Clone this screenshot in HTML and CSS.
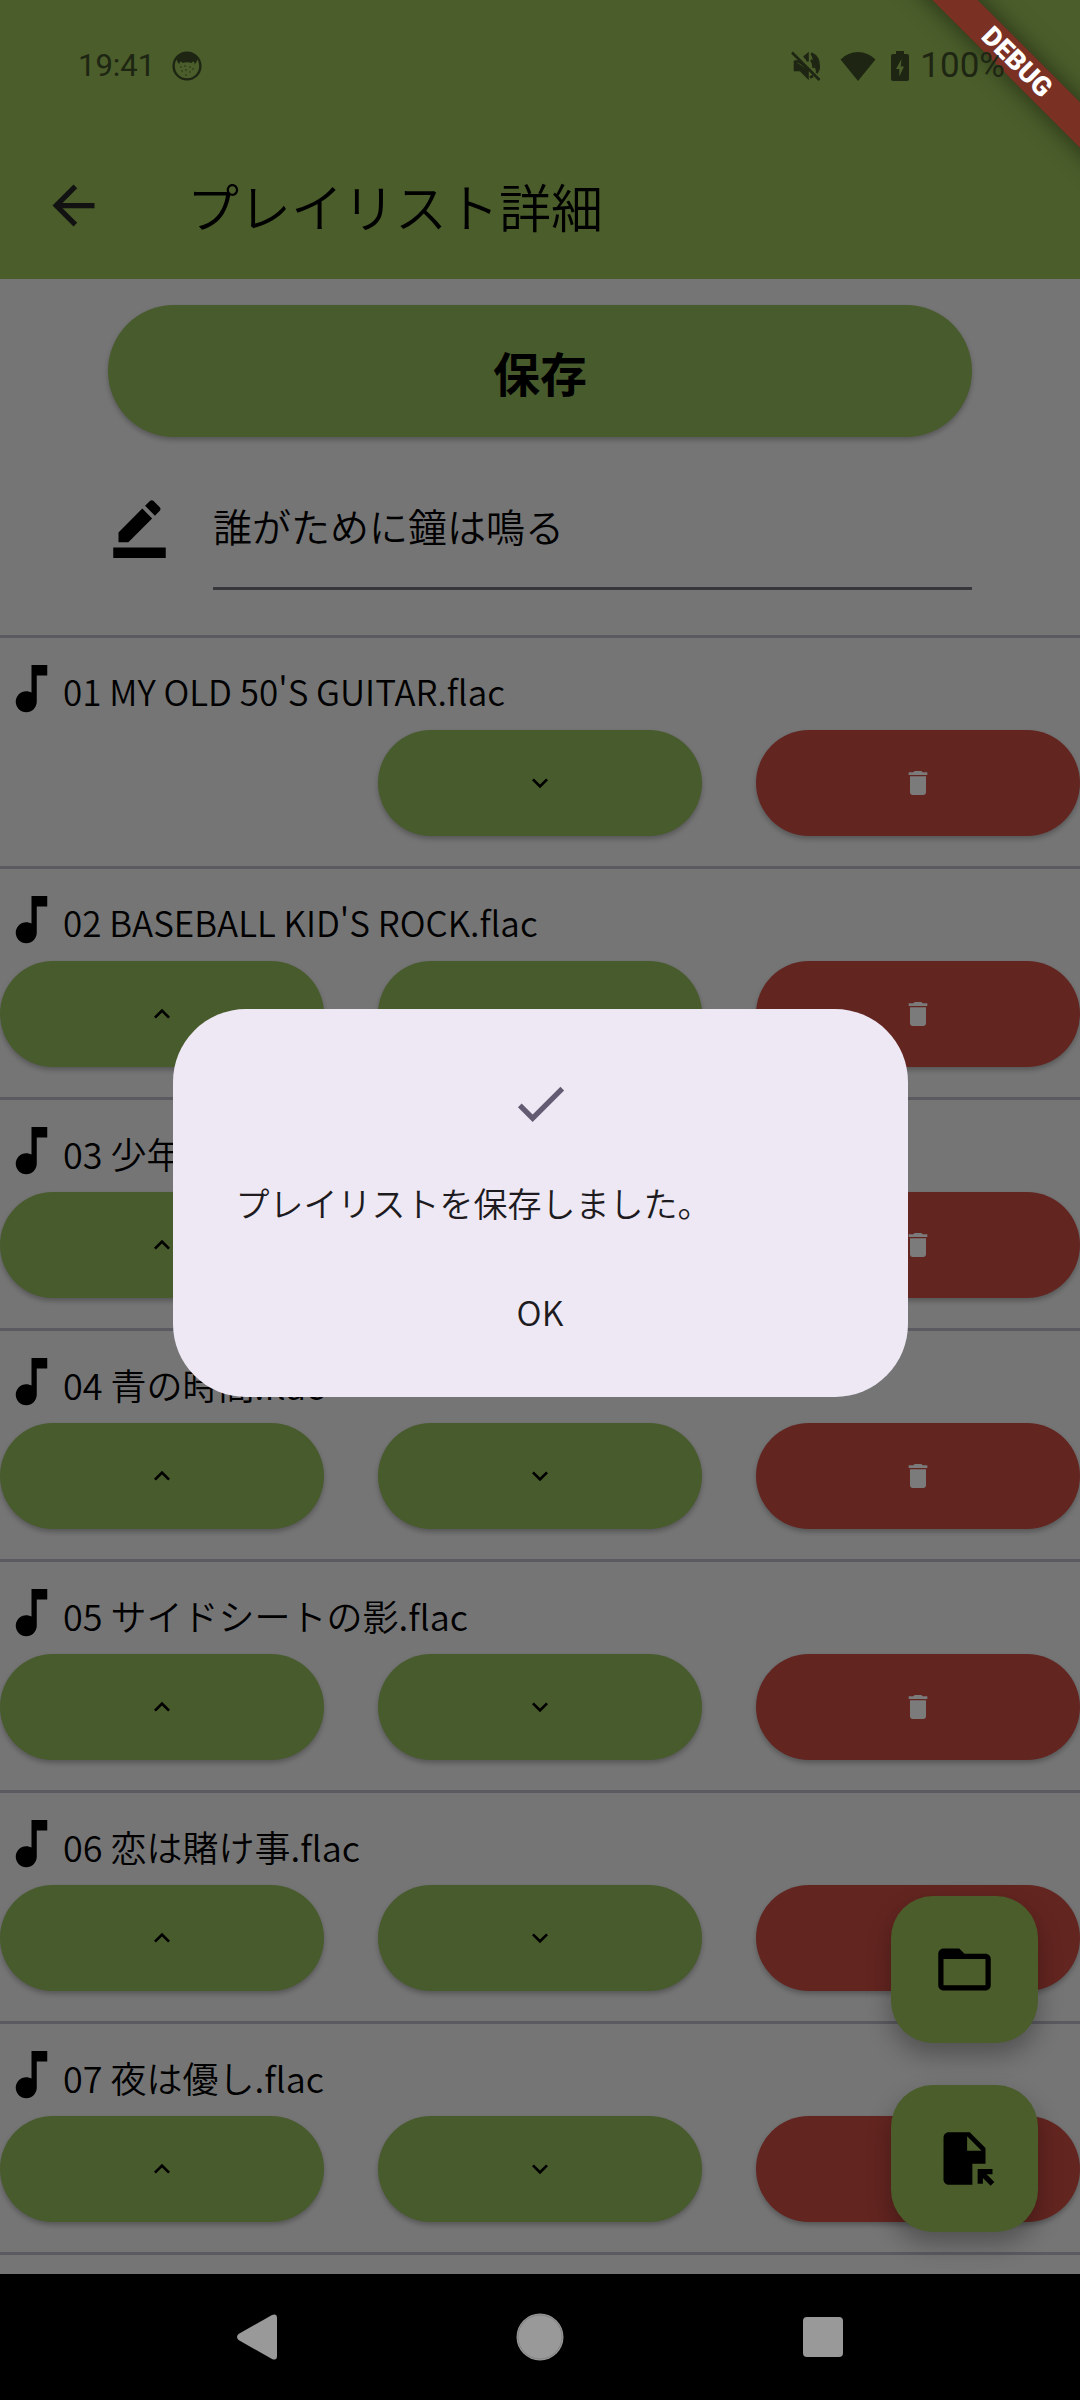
FILE: index.html
```html
<!DOCTYPE html>
<html lang="ja">
<head>
<meta charset="utf-8">
<meta name="viewport" content="width=device-width, initial-scale=1">
<title>プレイリスト詳細</title>
<link rel="stylesheet" href="styles.css">
</head>
<body>
<svg class="sprite" aria-hidden="true">
  <symbol id="note" viewBox="0 0 24 24"><path d="M12 3v10.55c-.59-.34-1.27-.55-2-.55-2.21 0-4 1.79-4 4s1.79 4 4 4 4-1.79 4-4V7h4V3z"/></symbol>
  <symbol id="up" viewBox="0 0 24 24"><path d="M7.41 15.41 12 10.83l4.59 4.58L18 14l-6-6-6 6z"/></symbol>
  <symbol id="down" viewBox="0 0 24 24"><path d="M7.41 8.59 12 13.17l4.59-4.58L18 10l-6 6-6-6z"/></symbol>
  <symbol id="trash" viewBox="0 0 24 24"><path d="M6 19c0 1.1.9 2 2 2h8c1.1 0 2-.9 2-2V7H6v12zM19 4h-3.5l-1-1h-5l-1 1H5v2h14V4z"/></symbol>
</svg>

<div class="screen">
  <header class="top">
    <div class="status">
      <span class="clock">19:41</span>
      <svg class="face" viewBox="0 0 30 30"><circle cx="15" cy="15" r="13.4" fill="none" stroke="currentColor" stroke-width="2.4"/><path d="M4 7Q9 1 15 1t11 6Q25 11 22.500 13.500q.500-2-1-3-1.500 0-2 1.500-4.500-1.500-9 0-.5-1.500-2-1.500-1.500 1-1 3Q5 11 4 7z"/><circle cx="9" cy="16" r=".7"/><circle cx="13" cy="15" r=".7"/><circle cx="18" cy="16" r=".7"/><circle cx="21" cy="18" r=".7"/><circle cx="10" cy="20" r=".7"/><circle cx="14" cy="19" r=".7"/><circle cx="18" cy="21" r=".7"/><circle cx="14" cy="24" r=".7"/></svg>
      <span class="spacer"></span>
      <svg class="mute" viewBox="0 0 30 30" fill="none" stroke="currentColor" stroke-width="2.6"><path d="M1 1.500l27.500 27.500M4 10.500h5.500l9 9M4 9.500v9.500h5.500l7 7v-8M13 6.500l3.500-3v7M20 9q3 2.500 2.500 8M20 2.500q9 4 7.500 15.500-.500 2-2 4M19 26.500l3-1.500"/></svg>
      <svg class="wifi" viewBox="0 0 36 30"><path d="M18 30 .5 8.500Q8 1 18 1t17.500 7.500z"/></svg>
      <svg class="battery" viewBox="0 0 18 30"><path fill-rule="evenodd" d="M5 0h8v3h3q2 0 2 2v23q0 2-2 2H2q-2 0-2-2V5q0-2 2-2h3zM10.500 8 5 18h3.300v7.500L13 15.500H9.800z"/></svg>
      <span class="percent">100%</span>
    </div>
    <div class="bar">
      <button class="back" aria-label="戻る"><svg viewBox="0 0 24 24"><path d="M20 11H7.830l5.590-5.590L12 4l-8 8 8 8 1.410-1.410L7.830 13H20z"/></svg></button>
      <h1>プレイリスト詳細</h1>
    </div>
    <div class="debug"><span>DEBUG</span></div>
  </header>

  <main>
    <form class="editor">
      <button type="button" class="save">保存</button>
      <div class="field">
        <label for="name" aria-label="プレイリスト名"><svg viewBox="0 0 24 24"><path d="M22 24H2v-4h20v4zM13.060 5.190l3.750 3.750L7.750 18H4v-3.750l9.060-9.060zm4.820 2.680-3.750-3.750 1.830-1.830c.39-.39 1.020-.39 1.410 0l2.340 2.340c.39.39.39 1.020 0 1.410l-1.830 1.830z"/></svg></label>
        <input id="name" type="text" value="誰がために鐘は鳴る">
      </div>
    </form>
    <ul class="tracks">
      <li>
        <p><svg><use href="#note"/></svg><span class="latin">01 MY OLD 50'S GUITAR.flac</span></p>
        <div class="actions"><button class="down" aria-label="下へ"><svg><use href="#down"/></svg></button><button class="delete" aria-label="削除"><svg><use href="#trash"/></svg></button></div>
      </li>
      <li>
        <p><svg><use href="#note"/></svg><span class="latin">02 BASEBALL KID'S ROCK.flac</span></p>
        <div class="actions"><button class="up" aria-label="上へ"><svg><use href="#up"/></svg></button><button class="down" aria-label="下へ"><svg><use href="#down"/></svg></button><button class="delete" aria-label="削除"><svg><use href="#trash"/></svg></button></div>
      </li>
      <li>
        <p><svg><use href="#note"/></svg><span>03 少年.flac</span></p>
        <div class="actions"><button class="up" aria-label="上へ"><svg><use href="#up"/></svg></button><button class="down" aria-label="下へ"><svg><use href="#down"/></svg></button><button class="delete" aria-label="削除"><svg><use href="#trash"/></svg></button></div>
      </li>
      <li>
        <p><svg><use href="#note"/></svg><span>04 青の時間.flac</span></p>
        <div class="actions"><button class="up" aria-label="上へ"><svg><use href="#up"/></svg></button><button class="down" aria-label="下へ"><svg><use href="#down"/></svg></button><button class="delete" aria-label="削除"><svg><use href="#trash"/></svg></button></div>
      </li>
      <li>
        <p><svg><use href="#note"/></svg><span>05 サイドシートの影.flac</span></p>
        <div class="actions"><button class="up" aria-label="上へ"><svg><use href="#up"/></svg></button><button class="down" aria-label="下へ"><svg><use href="#down"/></svg></button><button class="delete" aria-label="削除"><svg><use href="#trash"/></svg></button></div>
      </li>
      <li>
        <p><svg><use href="#note"/></svg><span>06 恋は賭け事.flac</span></p>
        <div class="actions"><button class="up" aria-label="上へ"><svg><use href="#up"/></svg></button><button class="down" aria-label="下へ"><svg><use href="#down"/></svg></button><button class="delete" aria-label="削除"></button></div>
      </li>
      <li>
        <p><svg><use href="#note"/></svg><span>07 夜は優し.flac</span></p>
        <div class="actions"><button class="up" aria-label="上へ"><svg><use href="#up"/></svg></button><button class="down" aria-label="下へ"><svg><use href="#down"/></svg></button><button class="delete" aria-label="削除"></button></div>
      </li>
    </ul>
    <div class="fabs">
      <button aria-label="フォルダを追加"><svg viewBox="0 0 24 24"><path d="M20 6h-8l-2-2H4c-1.100 0-1.990.9-1.990 2L2 18c0 1.100.9 2 2 2h16c1.100 0 2-.9 2-2V8c0-1.100-.9-2-2-2zm0 12H4V8h16v10z"/></svg></button>
      <button aria-label="ファイルを追加"><svg viewBox="0 0 24 24"><path d="M14 2H6c-1.100 0-1.990.9-1.990 2L4 20c0 1.100.89 2 1.990 2H15v-8h5V8l-6-6zm-1 7V3.500L18.500 9H13zm4 12.660V16h5.660v2h-2.240l2.950 2.950-1.410 1.410L19 19.410v2.240h-2z"/></svg></button>
    </div>
  </main>

  <nav class="system">
    <button aria-label="戻る"><svg viewBox="0 0 48 48"><path d="M5.500 21 39 2q5-2 5 3v38q0 5-5 3L5.500 27q-3-3 0-6z"/></svg></button>
    <button aria-label="ホーム"><svg viewBox="0 0 48 48"><circle cx="24" cy="24" r="23.500"/><circle cx="24" cy="24" r="22" fill="none" stroke="#777" stroke-width=".7"/></svg></button>
    <button aria-label="履歴"><svg viewBox="0 0 48 48"><rect x="4" y="4" width="40" height="40" rx="4"/></svg></button>
  </nav>

  <div class="overlay">
    <section class="dialog" role="alertdialog" aria-modal="true" aria-describedby="message">
      <svg viewBox="0 0 24 24"><path d="M9 16.170 4.830 12l-1.420 1.410L9 19 21 7l-1.410-1.410z"/></svg>
      <p id="message">プレイリストを保存しました。</p>
      <button>OK</button>
    </section>
  </div>
</div>
</body>
</html>
```

FILE: styles.css
```css
:root {
  --bar: #4a5d2a;
  --green: #485b2c;
  --red: #632520;
  --surface: #757575;
  --line: #5b5a60;
  --status: #1e2613;
}

* { box-sizing: border-box; }

body {
  margin: 0;
  background: #000;
  color: #000;
  font-family: "Noto Sans CJK JP", sans-serif;
  font-size: 36px;
  font-weight: 350;
}

h1, p, ul { margin: 0; padding: 0; }

button {
  display: grid;
  place-items: center;
  padding: 0;
  border: 0;
  background: none;
  color: inherit;
  font: inherit;
}

svg { display: block; flex: none; fill: currentColor; }

.sprite { position: absolute; width: 0; height: 0; }

.screen {
  position: relative;
  display: flex;
  flex-direction: column;
  height: 100vh;
  overflow: hidden;
}

/* status bar and app bar */
.top {
  position: relative;
  flex: none;
  background: var(--bar);
  overflow: hidden;
}

.status {
  position: relative;
  z-index: 1;
  display: flex;
  align-items: center;
  height: 132px;
  padding: 0 75px 0 78px;
  color: var(--status);
  font: 400 31px/40px Roboto, sans-serif;
}

.percent { font-size: 35px; }
.spacer { flex: 1; }
.face { width: 30px; height: 30px; margin-left: 17px; }
.mute { width: 30px; height: 30px; }
.wifi { width: 36px; height: 30px; margin-left: 19px; }
.battery { width: 18px; height: 30px; margin: 0 11px 0 15px; }

.bar {
  display: flex;
  align-items: center;
  gap: 82px;
  height: 147px;
  padding-left: 42px;
}

.back { color: #121212; }
.back svg { width: 63px; height: 63px; }

h1 { font-size: 52px; font-weight: 350; line-height: 72px; }

.debug {
  position: absolute;
  top: 46px;
  left: calc(100% - 213px);
  width: 300px;
  height: 32px;
  background: #7a3023;
  box-shadow: 0 0 24px rgba(0, 0, 0, .5);
  color: #fff;
  font: 900 27px/32px Roboto, sans-serif;
  text-align: center;
  transform: rotate(45deg);
}

/* playlist editor */
main {
  position: relative;
  flex: 1;
  min-height: 0;
  overflow: hidden;
  background: var(--surface);
}

.editor { padding: 26px 10% 45px; }

.save {
  width: 100%;
  height: 132px;
  border-radius: 66px;
  background: var(--green);
  box-shadow: 0 3px 5px rgba(0, 0, 0, .25);
  font-size: 47px;
  font-weight: 700;
}

.field {
  display: flex;
  align-items: center;
  gap: 42px;
  padding-top: 26px;
}

.field svg { width: 63px; height: 63px; }

.field input {
  flex: 1;
  min-width: 0;
  height: 127px;
  padding: 0;
  border: 0;
  border-bottom: 3px solid #37363b;
  background: none;
  color: inherit;
  font: inherit;
  font-size: 39px;
}

.tracks { list-style: none; border-bottom: 3px solid var(--line); }

.tracks li {
  height: 231px;
  padding-top: 19px;
  border-top: 3px solid var(--line);
}

.tracks p {
  display: flex;
  height: 73px;
  line-height: 68px;
  white-space: nowrap;
}

.tracks p svg { width: 63px; height: 63px; }
.latin { font-size: 35px; }

.actions { display: grid; grid-template-columns: repeat(3, 30%); column-gap: 5%; }

.actions button {
  height: 106px;
  border-radius: 53px;
  background: var(--green);
  box-shadow: 0 3px 5px rgba(0, 0, 0, .25);
}

.actions svg { width: 32px; height: 32px; }
.actions .down { grid-column: 2; }
.actions .delete { background: var(--red); color: #7b7b7b; }

.fabs {
  position: absolute;
  right: 42px;
  bottom: 42px;
  display: grid;
  gap: 42px;
}

.fabs button {
  width: 147px;
  height: 147px;
  border-radius: 42px;
  background: var(--bar);
  box-shadow: 0 12px 24px rgba(0, 0, 0, .3);
}

.fabs svg { width: 63px; height: 63px; }

/* system navigation */
.system {
  display: flex;
  flex: none;
  align-items: center;
  justify-content: center;
  gap: 235px;
  height: 126px;
  color: #999;
}

.system svg { width: 48px; height: 48px; }

/* saved message */
.overlay {
  position: absolute;
  inset: 0;
  z-index: 2;
  display: grid;
  place-items: center;
  padding: 132px 40px 126px;
}

.dialog {
  display: grid;
  justify-items: center;
  width: 100%;
  max-width: 735px;
  padding: 63px 63px 33px;
  border-radius: 73px;
  background: #eee8f4;
  color: #1d1b20;
  font-size: 34px;
}

.dialog svg { width: 63px; height: 63px; color: #625b71; }
.dialog p { justify-self: start; padding: 42px 0 30px; line-height: 52px; }
.dialog button { min-width: 168px; height: 105px; }
```
